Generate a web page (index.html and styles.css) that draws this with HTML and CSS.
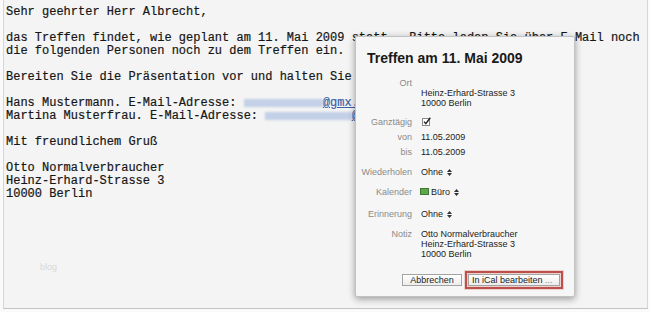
FILE: index.html
```html
<!DOCTYPE html>
<html lang="de">
<head>
<meta charset="utf-8">
<title>Treffen am 11. Mai 2009</title>
<link rel="stylesheet" href="styles.css">
</head>
<body>
<div class="frame">
  <div class="mail">
    <p class="ln">Sehr geehrter Herr Albrecht,</p>
    <p class="ln blank"></p>
    <p class="ln">das Treffen findet, wie geplant am 11. Mai 2009 statt.  Bitte laden Sie über E-Mail noch</p>
    <p class="ln">die folgenden Personen noch zu dem Treffen ein.</p>
    <p class="ln blank"></p>
    <p class="ln">Bereiten Sie die Präsentation vor und halten Sie</p>
    <p class="ln blank"></p>
    <p class="ln">Hans Mustermann. E-Mail-Adresse: <span class="blur b11"></span><a class="link">@gmx.</a></p>
    <p class="ln">Martina Musterfrau. E-Mail-Adresse: <span class="blur b12"></span><a class="link">@</a></p>
    <p class="ln blank"></p>
    <p class="ln">Mit freundlichem Gruß</p>
    <p class="ln blank"></p>
    <p class="ln">Otto Normalverbraucher</p>
    <p class="ln">Heinz-Erhard-Strasse 3</p>
    <p class="ln">10000 Berlin</p>
  </div>
  <div class="watermark">blog</div>
</div>

<div class="popup">
  <div class="title">Treffen am 11. Mai 2009</div>
  <div class="row">
    <div class="lbl">Ort</div>
    <div class="val"><br>Heinz-Erhard-Strasse 3<br>10000 Berlin</div>
  </div>
  <div class="row allday">
    <div class="lbl">Ganztägig</div>
    <div class="val"><svg class="check" width="9" height="9" viewBox="0 0 9 9"><rect x="0.5" y="1.5" width="7" height="7" fill="#fff" stroke="#8a8a8a"/><path d="M2 4.6 L3.8 6.6 L8.3 0.8" fill="none" stroke="#222" stroke-width="1.4"/></svg></div>
  </div>
  <div class="row date">
    <div class="lbl">von</div>
    <div class="val">11.05.2009</div>
  </div>
  <div class="row date">
    <div class="lbl">bis</div>
    <div class="val">11.05.2009</div>
  </div>
  <div class="row sel">
    <div class="lbl">Wiederholen</div>
    <div class="val">Ohne <svg class="arrows" width="5" height="7" viewBox="0 0 5 7"><path d="M0 3 L2.5 0 L5 3Z M0 4 L2.5 7 L5 4Z" fill="#333"/></svg></div>
  </div>
  <div class="row sel">
    <div class="lbl">Kalender</div>
    <div class="val"><span class="swatch"></span>Büro <svg class="arrows" width="5" height="7" viewBox="0 0 5 7"><path d="M0 3 L2.5 0 L5 3Z M0 4 L2.5 7 L5 4Z" fill="#333"/></svg></div>
  </div>
  <div class="row rem">
    <div class="lbl">Erinnerung</div>
    <div class="val">Ohne <svg class="arrows" width="5" height="7" viewBox="0 0 5 7"><path d="M0 3 L2.5 0 L5 3Z M0 4 L2.5 7 L5 4Z" fill="#333"/></svg></div>
  </div>
  <div class="row note">
    <div class="lbl">Notiz</div>
    <div class="val">Otto Normalverbraucher<br>Heinz-Erhard-Strasse 3<br>10000 Berlin</div>
  </div>
  <div class="actions">
    <button class="btn cancel">Abbrechen</button>
    <button class="btn edit">In iCal bearbeiten <span class="dots">...</span></button>
  </div>
</div>
</body>
</html>
```
FILE: styles.css
```css
html, body {
  margin: 0;
  padding: 0;
}
body {
  width: 650px;
  height: 312px;
  background: #fafafa;
  position: relative;
  overflow: hidden;
}
.frame {
  box-sizing: border-box;
  height: 309px;
  margin: 0 2px 0 3px;
  border: 1px solid #d6d6d6;
  border-top: 0;
  border-bottom-color: #c4c4c4;
  background: #f4f4f4;
  padding: 6px 0 0 2px;
  position: relative;
}
.mail {
  display: flex;
  flex-direction: column;
  align-items: flex-start;
  font: 12px/13px "Liberation Mono", "Courier New", monospace;
  color: #161616;
  -webkit-text-stroke: 0.2px #161616;
}
.ln {
  margin: 0;
  white-space: pre;
  height: 13px;
}
.blur {
  display: inline-block;
  height: 8px;
  background: #c3d0e7;
  filter: blur(1.2px);
  vertical-align: -1px;
}
.b11 { width: 11ch; }
.b12 { width: 12ch; }
.link {
  color: #3c5fa6;
  -webkit-text-stroke: 0.2px #3c5fa6;
  text-decoration: underline;
}
.watermark {
  position: absolute;
  left: 36px;
  top: 262px;
  font: 9px "Liberation Sans", Arial, sans-serif;
  color: #d8d8d8;
}
.popup {
  position: absolute;
  left: 355px;
  top: 36px;
  width: 220px;
  height: 261px;
  box-sizing: border-box;
  background: #f6f6f6;
  border: 1px solid #c2c2c2;
  border-radius: 2px;
  box-shadow: 0 2px 7px rgba(0, 0, 0, 0.38);
  padding: 13px 14px 0 0;
  font: 9px/10px "Liberation Sans", Arial, sans-serif;
}
.title {
  font: bold 14px/16px "Liberation Sans", Arial, sans-serif;
  color: #1a1a1a;
  margin: 0 0 12px 11px;
}
.row {
  display: flex;
}
.lbl {
  flex: none;
  width: 56px;
  margin-right: 9px;
  text-align: right;
  color: #8a8a8a;
}
.val {
  color: #222;
}
.allday { margin-top: 9px; }
.date { margin-top: 5px; }
.sel { margin-top: 10px; }
.rem { margin-top: 12px; }
.note { margin-top: 10px; }
.check {
  display: block;
  margin: 0 0 0 1px;
}
.arrows {
  vertical-align: -1px;
  margin-left: 1px;
}
.swatch {
  display: inline-block;
  width: 7px;
  height: 5px;
  background: #5ea848;
  border: 1px solid #3e7a30;
  margin: 0 2px 0 -1px;
  vertical-align: 0;
}
.actions {
  display: flex;
  justify-content: flex-end;
  gap: 6px;
  margin-top: 15px;
}
.btn {
  box-sizing: border-box;
  height: 12px;
  padding: 0;
  margin: 0;
  font: 9px/10px "Liberation Sans", Arial, sans-serif;
  color: #222;
  background: linear-gradient(#ffffff, #ececec);
  border: 1px solid #a3a3a3;
  border-radius: 0;
}
.cancel {
  width: 60px;
}
.edit {
  width: 92px;
  text-align: left;
  padding-left: 3px;
  outline: 2px solid #bd5049;
  outline-offset: 1px;
  box-shadow: 0 0 0 4px rgba(214, 140, 135, 0.35);
}
.dots {
  color: #8a8a8a;
}
```
